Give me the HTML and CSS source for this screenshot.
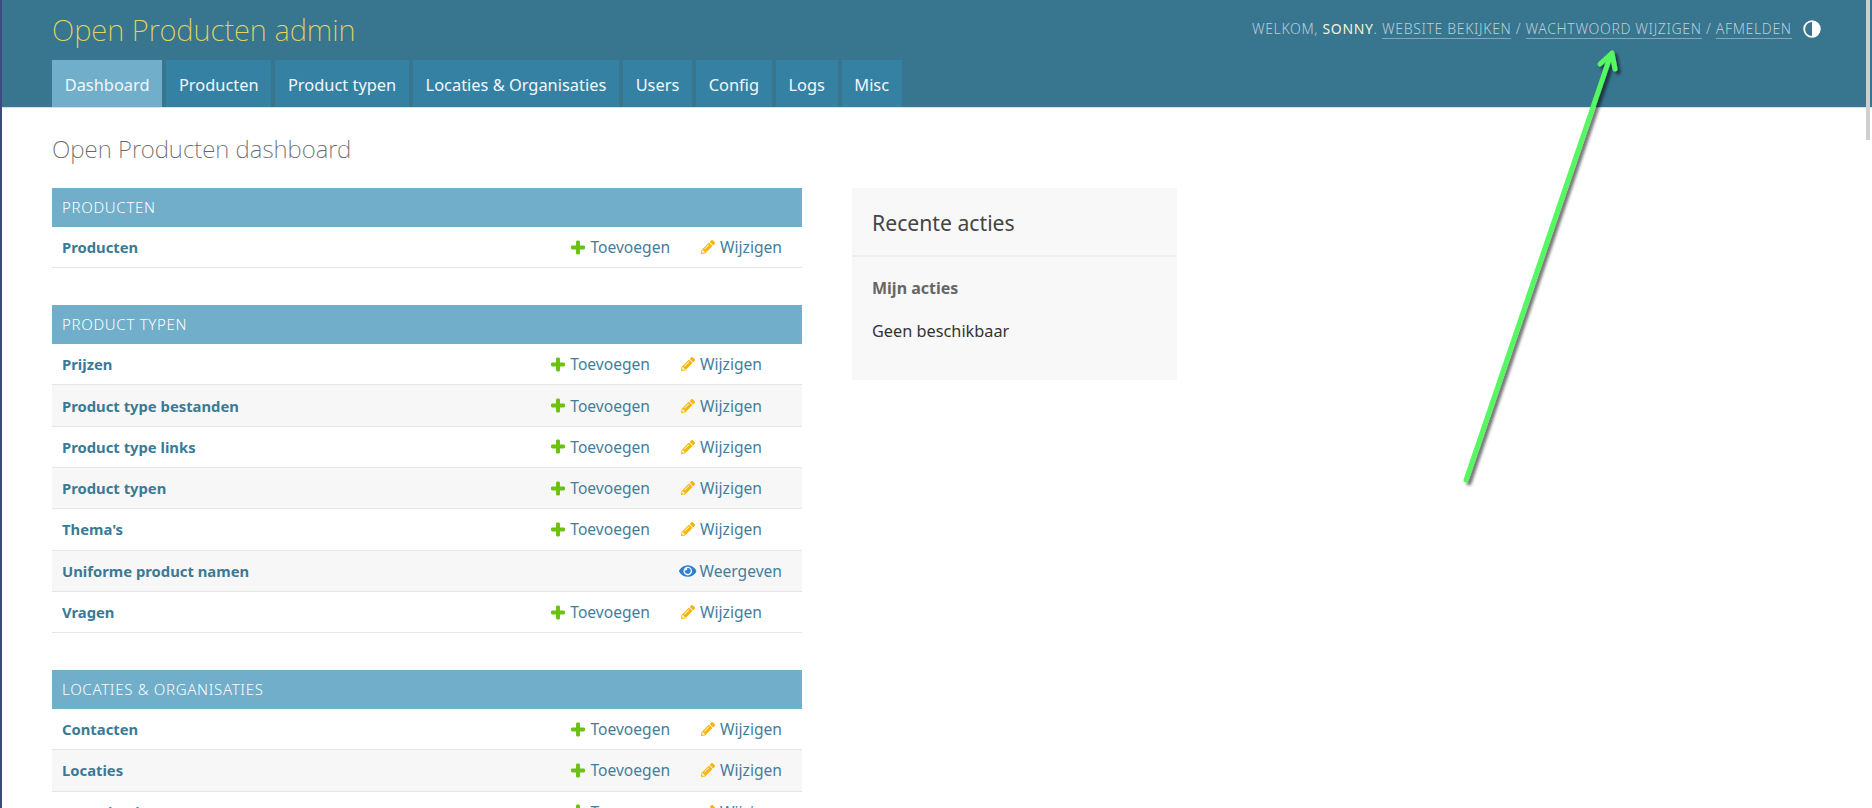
FILE: index.html
```html
<!DOCTYPE html>
<html>

<head>
    <link rel="stylesheet" href="styles.css">
    <title>Open Producten admin</title>
</head>

<body>
    <svg width="0" height="0" class="defs">
        <symbol id="plus" viewBox="0 0 448 512"><path fill="#6cc111" stroke="#6cc111" stroke-width="36" d="M416 208H272V64c0-17.67-14.33-32-32-32h-32c-17.67 0-32 14.33-32 32v144H32c-17.67 0-32 14.33-32 32v32c0 17.67 14.33 32 32 32h144v144c0 17.67 14.33 32 32 32h32c17.67 0 32-14.33 32-32V304h144c17.67 0 32-14.33 32-32v-32c0-17.67-14.33-32-32-32z"/></symbol>
        <symbol id="pencil" viewBox="0 0 512 512"><path fill="#f5b70c" d="M497.9 142.1l-46.1 46.1c-4.7 4.7-12.3 4.7-17 0l-111-111c-4.7-4.7-4.7-12.3 0-17l46.1-46.1c18.7-18.7 49.1-18.7 67.9 0l60.1 60.1c18.8 18.7 18.8 49.1 0 67.9zM284.2 99.8L21.6 362.4.4 483.9c-2.9 16.4 11.4 30.6 27.8 27.8l121.5-21.3 262.6-262.6c4.7-4.7 4.7-12.3 0-17l-111-111c-4.8-4.7-12.4-4.7-17.1 0zM124.1 339.9c-5.5-5.5-5.5-14.3 0-19.8l154-154c5.5-5.5 14.3-5.5 19.8 0s5.5 14.3 0 19.8l-154 154c-5.5 5.5-14.3 5.5-19.8 0zM88 424h48v36.3l-64.5 11.3-31.1-31.1L51.7 376H88v48z"/></symbol>
        <symbol id="eye" viewBox="0 0 576 512"><path fill="#2d7fd3" d="M572.52 241.4C518.29 135.59 410.93 64 288 64S57.68 135.64 3.48 241.41a32.35 32.35 0 0 0 0 29.19C57.71 376.41 165.07 448 288 448s230.32-71.64 284.52-177.41a32.35 32.35 0 0 0 0-29.19zM288 400a144 144 0 1 1 144-144 143.93 143.93 0 0 1-144 144zm0-240a95.31 95.31 0 0 0-25.31 3.79 47.85 47.85 0 0 1-66.9 66.9A95.78 95.78 0 1 0 288 160z"/></symbol>
    </svg>

    <header class="header">
        <div class="top">
            <div class="branding">Open Producten admin</div>
            <div class="tools">
                Welkom, <strong>Sonny</strong>.
                <a href="#">Website bekijken</a> /
                <a href="#">Wachtwoord wijzigen</a> /
                <a href="#">Afmelden</a>
                <svg class="toggle" viewBox="0 0 18 18">
                    <circle cx="9" cy="9" r="7.8" fill="none" stroke="#fff" stroke-width="1.8"/>
                    <path d="M9 1.2a7.8 7.8 0 0 1 0 15.6z" fill="#fff"/>
                </svg>
            </div>
        </div>
        <nav class="tabs">
            <a class="tab active" href="#">Dashboard</a>
            <a class="tab" href="#">Producten</a>
            <a class="tab" href="#">Product typen</a>
            <a class="tab" href="#">Locaties &amp; Organisaties</a>
            <a class="tab" href="#">Users</a>
            <a class="tab" href="#">Config</a>
            <a class="tab" href="#">Logs</a>
            <a class="tab" href="#">Misc</a>
        </nav>
    </header>

    <main class="content">
        <h1 class="page-title">Open Producten dashboard</h1>

        <div class="columns">
            <div class="apps">
                <section class="module">
                    <h2 class="caption">Producten</h2>
                    <div class="row">
                        <a class="name" href="#">Producten</a>
                        <a class="action add" href="#"><svg class="ico ico-plus"><use href="#plus"/></svg>Toevoegen</a>
                        <a class="action change" href="#"><svg class="ico"><use href="#pencil"/></svg>Wijzigen</a>
                    </div>
                </section>

                <section class="module wide-actions">
                    <h2 class="caption">Product typen</h2>
                    <div class="row">
                        <a class="name" href="#">Prijzen</a>
                        <a class="action add" href="#"><svg class="ico ico-plus"><use href="#plus"/></svg>Toevoegen</a>
                        <a class="action change" href="#"><svg class="ico"><use href="#pencil"/></svg>Wijzigen</a>
                    </div>
                    <div class="row">
                        <a class="name" href="#">Product type bestanden</a>
                        <a class="action add" href="#"><svg class="ico ico-plus"><use href="#plus"/></svg>Toevoegen</a>
                        <a class="action change" href="#"><svg class="ico"><use href="#pencil"/></svg>Wijzigen</a>
                    </div>
                    <div class="row">
                        <a class="name" href="#">Product type links</a>
                        <a class="action add" href="#"><svg class="ico ico-plus"><use href="#plus"/></svg>Toevoegen</a>
                        <a class="action change" href="#"><svg class="ico"><use href="#pencil"/></svg>Wijzigen</a>
                    </div>
                    <div class="row">
                        <a class="name" href="#">Product typen</a>
                        <a class="action add" href="#"><svg class="ico ico-plus"><use href="#plus"/></svg>Toevoegen</a>
                        <a class="action change" href="#"><svg class="ico"><use href="#pencil"/></svg>Wijzigen</a>
                    </div>
                    <div class="row">
                        <a class="name" href="#">Thema's</a>
                        <a class="action add" href="#"><svg class="ico ico-plus"><use href="#plus"/></svg>Toevoegen</a>
                        <a class="action change" href="#"><svg class="ico"><use href="#pencil"/></svg>Wijzigen</a>
                    </div>
                    <div class="row">
                        <a class="name" href="#">Uniforme product namen</a>
                        <a class="action change view" href="#"><svg class="ico ico-eye"><use href="#eye"/></svg>Weergeven</a>
                    </div>
                    <div class="row">
                        <a class="name" href="#">Vragen</a>
                        <a class="action add" href="#"><svg class="ico ico-plus"><use href="#plus"/></svg>Toevoegen</a>
                        <a class="action change" href="#"><svg class="ico"><use href="#pencil"/></svg>Wijzigen</a>
                    </div>
                </section>

                <section class="module">
                    <h2 class="caption">Locaties &amp; Organisaties</h2>
                    <div class="row">
                        <a class="name" href="#">Contacten</a>
                        <a class="action add" href="#"><svg class="ico ico-plus"><use href="#plus"/></svg>Toevoegen</a>
                        <a class="action change" href="#"><svg class="ico"><use href="#pencil"/></svg>Wijzigen</a>
                    </div>
                    <div class="row">
                        <a class="name" href="#">Locaties</a>
                        <a class="action add" href="#"><svg class="ico ico-plus"><use href="#plus"/></svg>Toevoegen</a>
                        <a class="action change" href="#"><svg class="ico"><use href="#pencil"/></svg>Wijzigen</a>
                    </div>
                    <div class="row">
                        <a class="name" href="#">Organisaties</a>
                        <a class="action add" href="#"><svg class="ico ico-plus"><use href="#plus"/></svg>Toevoegen</a>
                        <a class="action change" href="#"><svg class="ico"><use href="#pencil"/></svg>Wijzigen</a>
                    </div>
                </section>
            </div>

            <aside class="recent">
                <h2 class="recent-title">Recente acties</h2>
                <h3 class="recent-sub">Mijn acties</h3>
                <p class="recent-none">Geen beschikbaar</p>
            </aside>
        </div>
    </main>

    <div class="scrollbar"></div>

    <!-- annotation drawn over the screenshot -->
    <svg class="arrow" width="1872" height="808" viewBox="0 0 1872 808">
        <defs>
            <filter id="shade" x="-20%" y="-20%" width="140%" height="140%">
                <feDropShadow dx="3" dy="3" stdDeviation="1.6" flood-color="#000" flood-opacity="0.55"/>
            </filter>
        </defs>
        <g filter="url(#shade)" fill="none" stroke="#55f860" stroke-width="5" stroke-linecap="round" stroke-linejoin="round">
            <path d="M1466 480L1611 54"/>
            <path d="M1600 64L1612 53L1615 69"/>
        </g>
    </svg>
</body>

</html>
```

FILE: styles.css
```css
html {
    height: 100%;
    overflow: hidden;
}

body {
    margin: 0;
    height: 100%;
    overflow: hidden;
    background: #fff;
    color: #333;
    font-family: "Noto Sans", "Open Sans", sans-serif;
    font-size: 15.6px;
    border-left: 2px solid #3c4a80;
}

a {
    text-decoration: none;
}

.defs {
    position: absolute;
}

.header {
    background: #38758f;
    height: 107px;
    border-bottom: 1px solid #d5e3e9;
    padding-left: 50px;
}

.top {
    display: flex;
    justify-content: space-between;
    height: 60px;
}

.branding {
    font-size: 29.2px;
    font-weight: 200;
    color: #e2d75c;
    padding-top: 10px;
}

.tools {
    font-size: 14px;
    font-weight: 300;
    text-transform: uppercase;
    letter-spacing: 0.66px;
    color: #b9cfd8;
    padding-top: 19px;
    margin-right: 51px;
}

.tools strong {
    color: #f2f4dc;
    font-weight: 400;
}

.tools a {
    color: #b9cfd8;
    border-bottom: 1px solid #7fa8ba;
}

.toggle {
    width: 18px;
    height: 18px;
    vertical-align: -4px;
    margin-left: 7px;
}

.tabs {
    display: flex;
    gap: 4px;
    height: 47px;
}

.tab {
    background: #3581a3;
    color: #f2f7f9;
    font-size: 16.4px;
    padding: 0 12.7px;
    line-height: 49px;
}

.tab.active {
    background: #70aeca;
}

.content {
    padding: 0 50px;
}

.page-title {
    font-size: 24.1px;
    font-weight: 200;
    color: #666;
    margin: 0;
    height: 80px;
    line-height: 82px;
}

.columns {
    display: flex;
    gap: 50px;
    align-items: flex-start;
}

.apps {
    width: 750px;
}

.module {
    margin-bottom: 36.8px;
}

.caption {
    margin: 0;
    background: #70aeca;
    color: #fff;
    font-size: 15px;
    font-weight: 300;
    text-transform: uppercase;
    letter-spacing: 0.7px;
    line-height: 39px;
    padding-left: 10px;
}

.row {
    display: flex;
    align-items: center;
    box-sizing: border-box;
    height: 41.3px;
    padding: 0 20px 0 10px;
    border-bottom: 1px solid #e6e6e6;
}

.row:nth-of-type(even) {
    background: #f7f7f7;
}

.name {
    flex: 1;
    font-size: 14.8px;
    font-weight: 700;
    color: #3a7a96;
}

.action {
    display: flex;
    align-items: center;
    gap: 5px;
    color: #447e9b;
}

.add {
    margin-right: 31px;
}

.wide-actions .change {
    width: 101px;
}

.wide-actions .view {
    width: 103px;
    gap: 3px;
}

.ico {
    width: 14px;
    height: 14px;
}

.ico-plus {
    width: 14px;
    height: 15px;
}

.ico-eye {
    width: 18px;
    height: 16px;
}

.recent {
    width: 325px;
    height: 192px;
    background: #f8f8f8;
}

.recent-title {
    margin: 0;
    font-size: 21.2px;
    font-weight: 400;
    color: #444;
    padding: 0 20px;
    height: 67px;
    line-height: 70px;
    border-bottom: 2px solid #eee;
}

.recent-sub {
    margin: 0;
    font-size: 16px;
    font-weight: 700;
    color: #666;
    padding: 20px 20px 0;
}

.recent-none {
    margin: 0;
    padding: 21px 20px 0;
    font-size: 16.3px;
    color: #333;
}

.scrollbar {
    position: fixed;
    top: 0;
    right: 2px;
    width: 4px;
    height: 140px;
    background: #cfcfcf;
}

.arrow {
    position: absolute;
    left: 0;
    top: 0;
    pointer-events: none;
}
```
